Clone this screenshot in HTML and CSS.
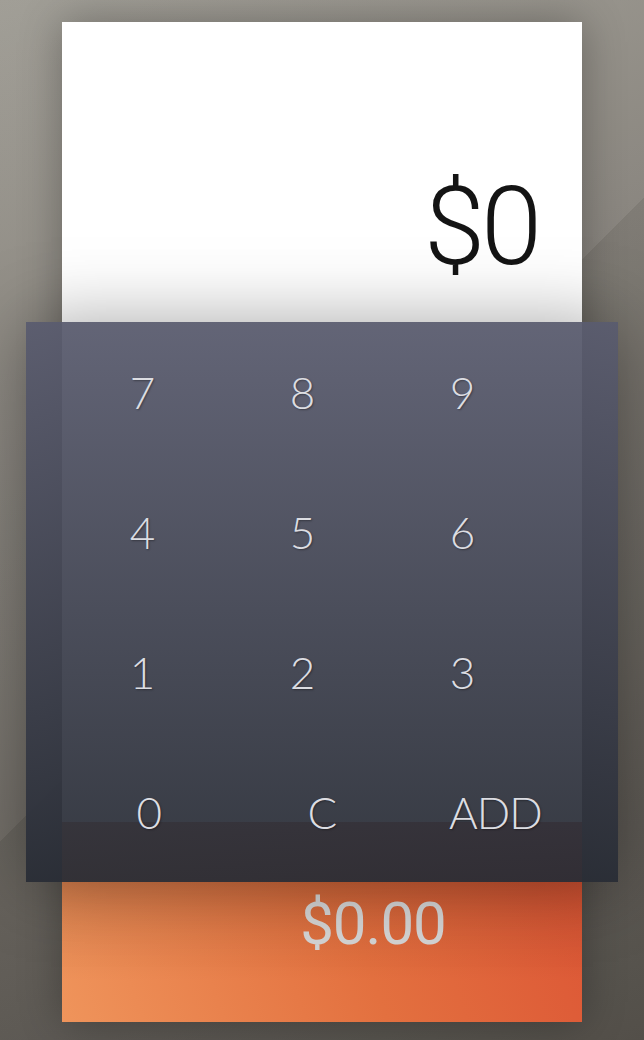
FILE: index.html
```html
<!DOCTYPE html>
<html lang="en">
<head>
<meta charset="utf-8">
<title>Tip Calculator</title>
<link rel="stylesheet" href="styles.css">
</head>
<body>
  <main class="card">
    <section class="display">
      <div class="amount">$0</div>
    </section>
    <section class="keypad">
      <div class="keys">
        <button class="key">7</button>
        <button class="key">8</button>
        <button class="key">9</button>
        <button class="key">4</button>
        <button class="key">5</button>
        <button class="key">6</button>
        <button class="key">1</button>
        <button class="key">2</button>
        <button class="key">3</button>
      </div>
      <div class="actions">
        <button class="key">0</button>
        <button class="key">C</button>
        <button class="key">ADD</button>
      </div>
    </section>
    <section class="total">
      <div class="total-value">$0.00</div>
    </section>
  </main>
</body>
</html>
```
FILE: styles.css
```css
html, body {
  margin: 0;
  height: 100%;
}

body {
  overflow: hidden;
  padding-top: 22px;
  box-sizing: border-box;
  font-family: "Lato", "Open Sans", sans-serif;
  background:
    linear-gradient(135deg, rgba(255, 255, 255, 0.035) 50%, rgba(0, 0, 0, 0.05) 50%),
    linear-gradient(160deg, #9e9b93 0%, #86827b 35%, #67635d 75%, #57534d 100%);
}

.card {
  width: 520px;
  height: 1000px;
  margin: 0 auto;
  background: #ffffff;
  box-shadow: 0 0 40px rgba(0, 0, 0, 0.3);
  display: flex;
  flex-direction: column;
}

.display {
  height: 300px;
  box-sizing: border-box;
  padding: 150px 44px 0 0;
  text-align: right;
}

.amount {
  font-family: "Roboto", "Lato", sans-serif;
  font-size: 110px;
  font-weight: 300;
  line-height: 1;
  color: #141414;
  letter-spacing: -4px;
}

.keypad {
  position: relative;
  z-index: 1;
  height: 560px;
  margin: 0 -36px -60px;
  padding: 0 36px;
  display: flex;
  flex-direction: column;
  background: linear-gradient(to bottom, rgba(89, 91, 110, 0.94), rgba(40, 44, 53, 0.94));
  box-shadow: 0 0 70px rgba(0, 0, 0, 0.35);
}

.keys {
  display: grid;
  grid-template-columns: repeat(3, 160px);
  grid-auto-rows: 140px;
}

.actions {
  display: grid;
  grid-template-columns: repeat(3, 1fr);
  grid-auto-rows: 140px;
}

.key {
  border: 0;
  padding: 0;
  margin: 0;
  background: transparent;
  font-family: "Lato", "Open Sans", sans-serif;
  font-size: 44px;
  font-weight: 300;
  line-height: 1;
  color: #dcdde2;
  text-shadow: 1px 1px 2px rgba(0, 0, 0, 0.35);
  display: flex;
  align-items: center;
  justify-content: center;
  letter-spacing: -1px;
}

.total {
  height: 200px;
  box-sizing: border-box;
  padding: 3px 0 0 102px;
  display: flex;
  align-items: center;
  justify-content: center;
  background:
    linear-gradient(to bottom, rgba(40, 10, 0, 0.22) 0%, rgba(40, 10, 0, 0.08) 45%, rgba(40, 10, 0, 0) 80%),
    linear-gradient(70deg, #ef945b 0%, #e3703f 55%, #dc5535 100%);
}

.total-value {
  font-family: "Roboto", "Lato", sans-serif;
  font-size: 60px;
  font-weight: 400;
  line-height: 1;
  color: #d3d3d3;
  letter-spacing: -1px;
}
```
